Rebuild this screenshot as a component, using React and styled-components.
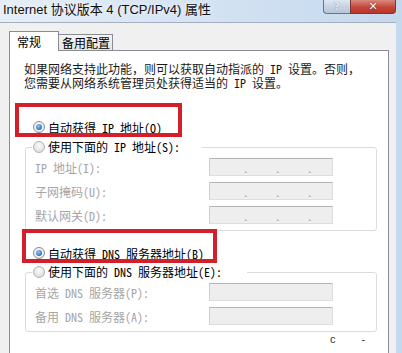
import React from 'react';
import styled, { createGlobalStyle } from 'styled-components';

const SONG = `"Noto Sans Mono CJK SC", "Noto Sans CJK SC", monospace`;

const GlobalStyle = createGlobalStyle`
  html, body {
    margin: 0;
    padding: 0;
    background: #f0f0f0;
  }
  body {
    font-family: "Noto Sans CJK SC", sans-serif;
    overflow: hidden;
  }
  * { box-sizing: border-box; }
`;

const Window = styled.div`
  position: relative;
  width: 402px;
  height: 353px;
  overflow: hidden;
  display: flex;
  flex-direction: column;
  background: linear-gradient(to right, #e6eef7 0%, #d6e4f3 45%, #c4d8ee 100%);
`;

const TitleBar = styled.div`
  height: 22px;
  flex-shrink: 0;
  display: flex;
  align-items: flex-start;
  padding-left: 3px;
`;

const Title = styled.div`
  font-family: "Liberation Sans", "Noto Sans CJK SC", sans-serif;
  font-size: 13px;
  line-height: 20px;
  color: #111;
  text-shadow: 0 0 6px rgba(255, 255, 255, 0.9);
`;

const Caption = styled.div`
  display: flex;
  margin-left: auto;
  margin-right: 6px;
`;

const CapButton = styled.div`
  height: 14px;
  width: ${p => p.$w}px;
  display: flex;
  align-items: center;
  justify-content: center;
  font-family: "DejaVu Sans", sans-serif;
  font-size: 11px;
  font-weight: bold;
  line-height: 1;
  border: 1px solid ${p => (p.$close ? '#7a3a33' : '#66768c')};
  border-top: none;
  color: ${p => (p.$close ? '#fff' : '#e8eef5')};
  background: ${p =>
    p.$close
      ? 'linear-gradient(#d98a7e, #c5473a 55%, #b8362a)'
      : 'linear-gradient(#dfe7f1, #c5d2e1 55%, #b7c6d8)'};
  border-radius: ${p => (p.$close ? '0 0 4px 0' : '0 0 0 4px')};
  text-shadow: ${p => (p.$close ? '0 0 2px #5a1a12' : '0 0 1px #5d6b80')};
  ${p => !p.$close && 'border-right: none;'}
`;

const Client = styled.div`
  flex: 1;
  min-height: 0;
  margin-right: 6px;
  background: #f0f0f0;
  border-top: 1px solid #a3afbd;
  padding: 8px 0 0 9px;
  display: flex;
  flex-direction: column;
  overflow: hidden;
`;

const TabStrip = styled.div`
  display: flex;
  align-items: flex-end;
  height: 19px;
  flex-shrink: 0;
`;

const Tab = styled.div`
  position: relative;
  z-index: ${p => (p.$active ? 1 : 0)};
  width: ${p => p.$w}px;
  height: ${p => (p.$active ? 20 : 16)}px;
  margin-bottom: ${p => (p.$active ? -1 : 0)}px;
  margin-left: ${p => (p.$active ? 0 : -1)}px;
  padding-left: ${p => p.$pad}px;
  display: flex;
  align-items: center;
  border: 1px solid #898c95;
  border-bottom: none;
  background: ${p => (p.$active ? '#fff' : 'linear-gradient(#f4f4f4, #e4e4e4)')};
  font-size: 12px;
  color: #000;
  white-space: nowrap;
`;

const Panel = styled.div`
  width: 380px;
  flex: 1;
  background: #fff;
  border: 1px solid #898c95;
  border-bottom: none;
  padding: 11px 0 0 14px;
  font-family: ${SONG};
  font-size: 12px;
`;

const Intro = styled.p`
  margin: 0;
  line-height: 14px;
  color: #1a1a1a;
  white-space: nowrap;
`;

const RadioRow = styled.div`
  display: flex;
  align-items: center;
  gap: 3px;
  height: 16px;
  padding-left: ${p => p.$indent || 0}px;
  margin-top: ${p => p.$top || 0}px;
  color: #000;
  white-space: nowrap;
`;

const RadioDot = styled.span`
  position: relative;
  flex-shrink: 0;
  width: 12px;
  height: 12px;
  border-radius: 50%;
  border: 1px solid ${p => (p.$on ? '#8a8a8a' : '#b3b3b3')};
  background: ${p =>
    p.$on
      ? 'radial-gradient(circle at 50% 40%, #ffffff, #e4e4e4)'
      : 'radial-gradient(circle at 50% 35%, #fbfbfb, #d6d6d6)'};
  &::after {
    content: '';
    display: ${p => (p.$on ? 'block' : 'none')};
    position: absolute;
    left: 2px;
    top: 2px;
    width: 6px;
    height: 6px;
    border-radius: 50%;
    background: radial-gradient(circle at 40% 35%, #9cc7f5, #2d6fc6 70%, #1d4f96);
  }
`;

const Group = styled.fieldset`
  margin: ${p => p.$top}px 0 0 1px;
  width: 352px;
  padding: 3px 6px 6px 6px;
  border: 1px solid #dcdcdc;
  border-radius: 3px;
  min-width: 0;
`;

const Legend = styled.legend`
  padding: 0 ${p => p.$tail}px 0 1px;
  margin: 0;
  line-height: 16px;
`;

const Fields = styled.div`
  display: grid;
  grid-template-columns: 177px 124px;
  row-gap: 6px;
  align-items: center;
`;

const FieldLabel = styled.span`
  padding-left: 3px;
  color: #a5a5a5;
  white-space: nowrap;
`;

const Box = styled.div`
  height: 18px;
  display: flex;
  align-items: flex-end;
  gap: 30px;
  padding: 0 0 1px 33px;
  background: #eeeeee;
  border: 1px solid #dedede;
  border-top-color: #b4b4b4;
  border-left-color: #cfcfcf;
  color: #9a9a9a;
  font-size: 11px;
  line-height: 12px;
`;

const Dot = styled.span`
  width: 2px;
`;

const Footer = styled.div`
  display: flex;
  gap: 26px;
  padding: 1px 0 0 306px;
  font-family: "Liberation Sans", sans-serif;
  font-size: 11px;
  line-height: 12px;
  color: #333;
`;

const Highlight = styled.div`
  position: absolute;
  left: ${p => p.$x}px;
  top: ${p => p.$y}px;
  width: ${p => p.$w}px;
  height: ${p => p.$h}px;
  border: 4px solid #d21f2b;
  pointer-events: none;
`;

function Radio({ on, children, ...rest }) {
  return (
    <RadioRow {...rest}>
      <RadioDot $on={on} />
      <span>{children}</span>
    </RadioRow>
  );
}

function IpBox({ dots }) {
  return (
    <Box>
      {dots && [0, 1, 2].map(i => <Dot key={i}>.</Dot>)}
    </Box>
  );
}

const ipRows = ['IP 地址(I):', '子网掩码(U):', '默认网关(D):'];
const dnsRows = ['首选 DNS 服务器(P):', '备用 DNS 服务器(A):'];

export default function App() {
  return (
    <Window>
      <GlobalStyle />
      <TitleBar>
        <Title>Internet 协议版本 4 (TCP/IPv4) 属性</Title>
        <Caption>
          <CapButton $w={27}>?</CapButton>
          <CapButton $w={46} $close>✕</CapButton>
        </Caption>
      </TitleBar>

      <Client>
        <TabStrip>
          <Tab $active $w={50} $pad={7}>常规</Tab>
          <Tab $w={55} $pad={3}>备用配置</Tab>
        </TabStrip>

        <Panel>
          <Intro>
            如果网络支持此功能，则可以获取自动指派的 IP 设置。否则，
            <br />
            您需要从网络系统管理员处获得适当的 IP 设置。
          </Intro>

          <Radio on $top={29} $indent={9}>自动获得 IP 地址(O)</Radio>

          <Group $top={4}>
            <Legend $tail={22}>
              <Radio>使用下面的 IP 地址(S):</Radio>
            </Legend>
            <Fields>
              {ipRows.map(label => (
                <React.Fragment key={label}>
                  <FieldLabel>{label}</FieldLabel>
                  <IpBox dots />
                </React.Fragment>
              ))}
            </Fields>
          </Group>

          <Radio on $top={14} $indent={9}>自动获得 DNS 服务器地址(B)</Radio>

          <Group $top={3}>
            <Legend $tail={25}>
              <Radio>使用下面的 DNS 服务器地址(E):</Radio>
            </Legend>
            <Fields>
              {dnsRows.map(label => (
                <React.Fragment key={label}>
                  <FieldLabel>{label}</FieldLabel>
                  <IpBox />
                </React.Fragment>
              ))}
            </Fields>
          </Group>

          <Footer>
            <span>c</span>
            <span>-</span>
          </Footer>
        </Panel>
      </Client>

      <Highlight $x={15} $y={103} $w={167} $h={34} />
      <Highlight $x={22} $y={229} $w={195} $h={34} />
    </Window>
  );
}
